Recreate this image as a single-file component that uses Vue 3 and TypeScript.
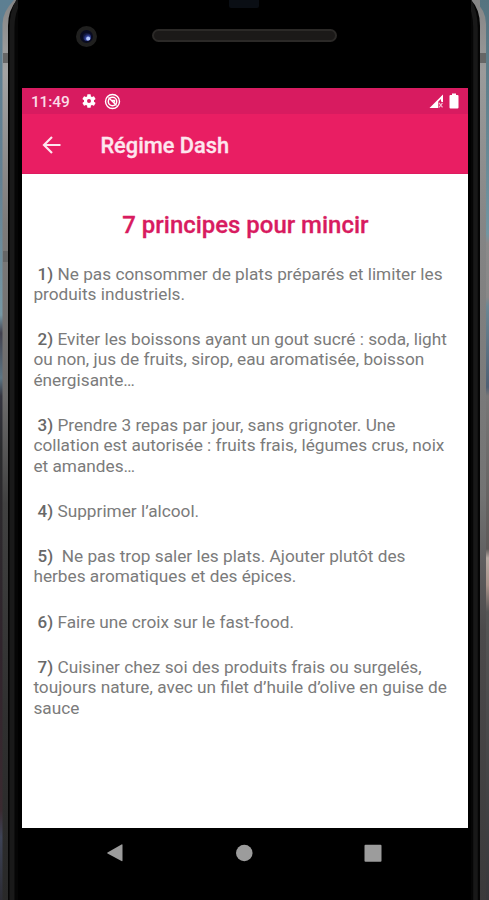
<script setup lang="ts">
interface Principle {
  id: number
  lines: string[]
}

const principles: Principle[] = [
  { id: 1, lines: ['Ne pas consommer de plats préparés et limiter les', 'produits industriels.'] },
  { id: 2, lines: ['Eviter les boissons ayant un gout sucré : soda, light', 'ou non, jus de fruits, sirop, eau aromatisée, boisson', 'énergisante…'] },
  { id: 3, lines: ['Prendre 3 repas par jour, sans grignoter. Une', 'collation est autorisée : fruits frais, légumes crus, noix', 'et amandes…'] },
  { id: 4, lines: ['Supprimer l’alcool.'] },
  { id: 5, lines: ['\u00a0Ne pas trop saler les plats. Ajouter plutôt des', 'herbes aromatiques et des épices.'] },
  { id: 6, lines: ['Faire une croix sur le fast-food.'] },
  { id: 7, lines: ['Cuisiner chez soi des produits frais ou surgelés,', 'toujours nature, avec un filet d’huile d’olive en guise de', 'sauce'] },
]
</script>

<template>
  <div class="stage">
    <svg class="casing" width="489" height="900" viewBox="0 0 489 900" aria-hidden="true">
      <defs>
        <linearGradient id="wallL" x1="0" y1="0" x2="0" y2="1">
          <stop offset="0" stop-color="#5d7f92" />
          <stop offset=".2" stop-color="#628092" />
          <stop offset=".35" stop-color="#7698a5" />
          <stop offset=".37" stop-color="#42414e" />
          <stop offset=".42" stop-color="#5c7584" />
          <stop offset=".44" stop-color="#353540" />
          <stop offset=".5" stop-color="#2a2b2d" />
          <stop offset=".72" stop-color="#30242c" />
          <stop offset=".9" stop-color="#3a2a30" />
          <stop offset=".93" stop-color="#3d4356" />
          <stop offset="1" stop-color="#2c2c34" />
        </linearGradient>
        <linearGradient id="wallR" x1="0" y1="0" x2="0" y2="1">
          <stop offset="0" stop-color="#55737f" />
          <stop offset=".26" stop-color="#7295a1" />
          <stop offset=".27" stop-color="#8a8a8a" />
          <stop offset=".33" stop-color="#888" />
          <stop offset=".34" stop-color="#6c8793" />
          <stop offset=".43" stop-color="#4f6074" />
          <stop offset=".44" stop-color="#777" />
          <stop offset=".61" stop-color="#5e5a59" />
          <stop offset=".62" stop-color="#b7aaa2" />
          <stop offset=".65" stop-color="#a99389" />
          <stop offset=".68" stop-color="#555" />
          <stop offset="1" stop-color="#38383b" />
        </linearGradient>
        <linearGradient id="rail" x1="0" y1="0" x2="0" y2="1">
          <stop offset="0" stop-color="#858585" />
          <stop offset=".08" stop-color="#a3a3a3" />
          <stop offset=".25" stop-color="#7d7b7a" />
          <stop offset=".44" stop-color="#6c6b6b" />
          <stop offset=".56" stop-color="#414141" />
          <stop offset=".8" stop-color="#303030" />
          <stop offset="1" stop-color="#292929" />
        </linearGradient>
        <linearGradient id="railR" x1="0" y1="0" x2="0" y2="1">
          <stop offset="0" stop-color="#858585" />
          <stop offset=".08" stop-color="#9b9b9b" />
          <stop offset=".25" stop-color="#858585" />
          <stop offset=".55" stop-color="#737373" />
          <stop offset=".7" stop-color="#4c4a4b" />
          <stop offset="1" stop-color="#3b3a3b" />
        </linearGradient>
      </defs>
      <rect width="30" height="900" fill="url(#wallL)" />
      <rect x="460" width="29" height="900" fill="url(#wallR)" />
      <path d="M14 0Q2.500 12 2.500 24V900H480V0Z" fill="url(#rail)" />
      <path d="M474 0Q486 10 486 24V900H240V0Z" fill="url(#railR)" />
      <path d="M17 0Q8 10 8 26V900H480V26Q480 9 471 0Z" fill="#050505" />
      <path d="M19 0Q12 12 12 28V900" fill="none" stroke="#191919" stroke-width="5" />
      <path d="M469 0Q475.500 12 475.500 28V900" fill="none" stroke="#181818" stroke-width="4.500" />
      <path d="M3 53H8V63H3ZM480 53H486V63H480ZM3 251H8V262H3Z" fill="#666" />
      <rect x="18" width="453" height="900" fill="#000" />
    </svg>

    <div class="device">
      <header class="bezel-top">
        <span class="camera"><i></i></span>
        <span class="speaker"></span>
        <span class="sensor"></span>
      </header>

      <main class="screen">
        <div class="status">
          <span class="clock">11:49</span>
          <svg class="gear" width="16" height="16" viewBox="0 0 24 24">
            <path fill="#fff" fill-rule="evenodd" d="M19.430 12.980l.07-.98-.07-.98 2.110-1.650c.2-.15.24-.42.12-.64l-2-3.460a.5.5 0 0 0-.6-.22l-2.500 1a7.500 7.500 0 0 0-1.690-.98l-.38-2.650A.5.5 0 0 0 14 2h-4a.5.5 0 0 0-.49.42l-.38 2.650c-.6.25-1.170.58-1.690.98l-2.500-1a.5.5 0 0 0-.6.22l-2 3.460a.5.5 0 0 0 .12.640l2.110 1.650-.07.98.07.98-2.110 1.650a.5.5 0 0 0-.12.640l2 3.460c.12.22.39.3.6.22l2.500-1c.52.4 1.090.73 1.690.98l.38 2.650c.03.24.24.42.49.42h4c.25 0 .46-.18.49-.42l.38-2.650c.6-.25 1.170-.58 1.690-.98l2.500 1c.22.08.48 0 .6-.22l2-3.460a.5.5 0 0 0-.12-.64zM12 15a3 3 0 1 1 0-6 3 3 0 0 1 0 6z" />
          </svg>
          <svg class="dnd" width="17" height="17" viewBox="0 0 17 17" fill="none" stroke="#fff">
            <circle cx="8.500" cy="8.500" r="7" stroke-width="1.400" />
            <circle cx="8.500" cy="8.500" r="4.200" stroke-width="1.500" />
            <path d="M4.500 4.500l8 8M7 7.500h3.500v2" stroke-width="1.300" />
          </svg>
          <span class="spacer"></span>
          <svg class="signal" width="15" height="15" viewBox="0 0 15 15">
            <path d="M.5 14L14 .5V14Z" fill="#fff" />
            <path d="M9.300 7.500L12 5V7.500H14V14H9.300Z" fill="#d81b60" />
            <path d="M10 8.800L13.500 13.300M13.500 8.800L10 13.300" stroke="#f5b8ce" stroke-width="1.200" />
            <path d="M13.300 2V8" stroke="#fff" stroke-width="1.400" />
          </svg>
          <svg class="battery" width="10" height="16" viewBox="0 0 10 16">
            <path d="M3 .5H7V2H8.500Q9.500 2 9.500 3V14.500Q9.500 15.500 8.500 15.500H1.500Q.5 15.500 .5 14.500V3Q.5 2 1.500 2H3Z" fill="#fff" />
          </svg>
        </div>

        <div class="appbar">
          <svg class="back" width="20" height="20" viewBox="0 0 20 20" fill="none" stroke="#fde6ee" stroke-width="2.200">
            <path d="M18.500 10H2.500M10 2L2 10L10 18" />
          </svg>
          <h1>Régime Dash</h1>
        </div>

        <section class="content">
          <h2>7 principes pour mincir</h2>
          <p v-for="p in principles" :key="p.id">
            <span v-for="(line, i) in p.lines" :key="i" class="line"><b v-if="i === 0">&nbsp;{{ p.id }})&nbsp;</b>{{ line }}</span>
          </p>
        </section>
      </main>

      <nav class="navbar">
        <svg width="18" height="20" viewBox="0 0 18 20"><path d="M1.500 9.500L15.500 1.500Q16.500 1 16.500 2V17.500Q16.500 18.500 15.500 18L1.500 10.500Q.7 10 1.500 9.500Z" fill="#9c9c9c" /></svg>
        <svg width="18" height="20" viewBox="0 0 18 20"><circle cx="9.300" cy="10" r="8.300" fill="#9c9c9c" /></svg>
        <svg width="18" height="20" viewBox="0 0 18 20"><rect x=".5" y="1.700" width="17" height="17" rx="1" fill="#9c9c9c" /></svg>
      </nav>
    </div>
  </div>
</template>

<style>
body {
  margin: 0;
  overflow: hidden;
}
</style>

<style scoped>
.stage {
  position: relative;
  width: 489px;
  height: 900px;
  overflow: hidden;
  background: #000;
  font-family: Roboto, "Liberation Sans", sans-serif;
}
.casing {
  position: absolute;
  inset: 0;
}
.device {
  position: relative;
  display: flex;
  flex-direction: column;
  width: 446px;
  height: 900px;
  margin-left: 22.400px;
}
.bezel-top {
  position: relative;
  display: flex;
  align-items: flex-start;
  height: 88px;
  flex: none;
}
.camera {
  display: flex;
  align-items: center;
  justify-content: center;
  box-sizing: border-box;
  width: 21px;
  height: 21px;
  margin: 26px 0 0 54px;
  border: 4px solid #20201f;
  border-radius: 50%;
  background: #090b20;
}
.camera i {
  width: 8px;
  height: 8px;
  border-radius: 50%;
  background: radial-gradient(circle at 65% 70%, #b5c8ff 0 1.500px, #34449d 2.500px, #11163e 5px);
}
.speaker {
  box-sizing: border-box;
  width: 185px;
  height: 13px;
  margin: 28.500px 0 0 55px;
  border: 2px solid #2b2927;
  border-radius: 7px;
  background: #1b1918;
}
.sensor {
  position: absolute;
  left: 207px;
  top: 0;
  width: 30px;
  height: 8px;
  border-radius: 0 0 2px 2px;
  background: #0a0e14;
}
.screen {
  display: flex;
  flex-direction: column;
  height: 740px;
  flex: none;
  background: #fff;
}
.status {
  display: flex;
  align-items: center;
  box-sizing: border-box;
  height: 26px;
  padding: 0 9px 0 8.500px;
  background: #d81b60;
  color: #fbdce7;
}
.clock {
  width: 50px;
  padding-top: 1px;
  font-size: 15.500px;
  font-weight: 500;
  letter-spacing: -0.100px;
}
.gear {
  margin-right: 7px;
}
.spacer {
  flex: 1;
}
.signal {
  margin-right: 5px;
}
.appbar {
  display: flex;
  align-items: center;
  box-sizing: border-box;
  height: 60px;
  padding: 2px 0 0 20px;
  border-bottom: 1px solid #dd1c60;
  background: #e91e63;
}
h1 {
  margin: 2px 0 0 38px;
  color: #fde6ee;
  font-size: 21.800px;
  font-weight: 500;
  line-height: 26px;
  white-space: nowrap;
  -webkit-text-stroke: 0.300px #fde6ee;
}
.content {
  padding: 37px 0 0 11px;
  color: #7b7b7b;
}
h2 {
  margin: 0 11px 24.500px 0;
  color: #d81b60;
  font-size: 23.950px;
  font-weight: 500;
  line-height: 28px;
  text-align: center;
  -webkit-text-stroke: 0.300px #d81b60;
}
p {
  margin: 0 0 25px;
  font-size: 17.240px;
  line-height: 20.300px;
}
.line {
  display: block;
  width: max-content;
  white-space: nowrap;
}
b {
  color: #686868;
  font-size: 17px;
  font-weight: 500;
}
.navbar {
  display: flex;
  justify-content: space-between;
  padding: 15px 86px 0 84px;
}
</style>
